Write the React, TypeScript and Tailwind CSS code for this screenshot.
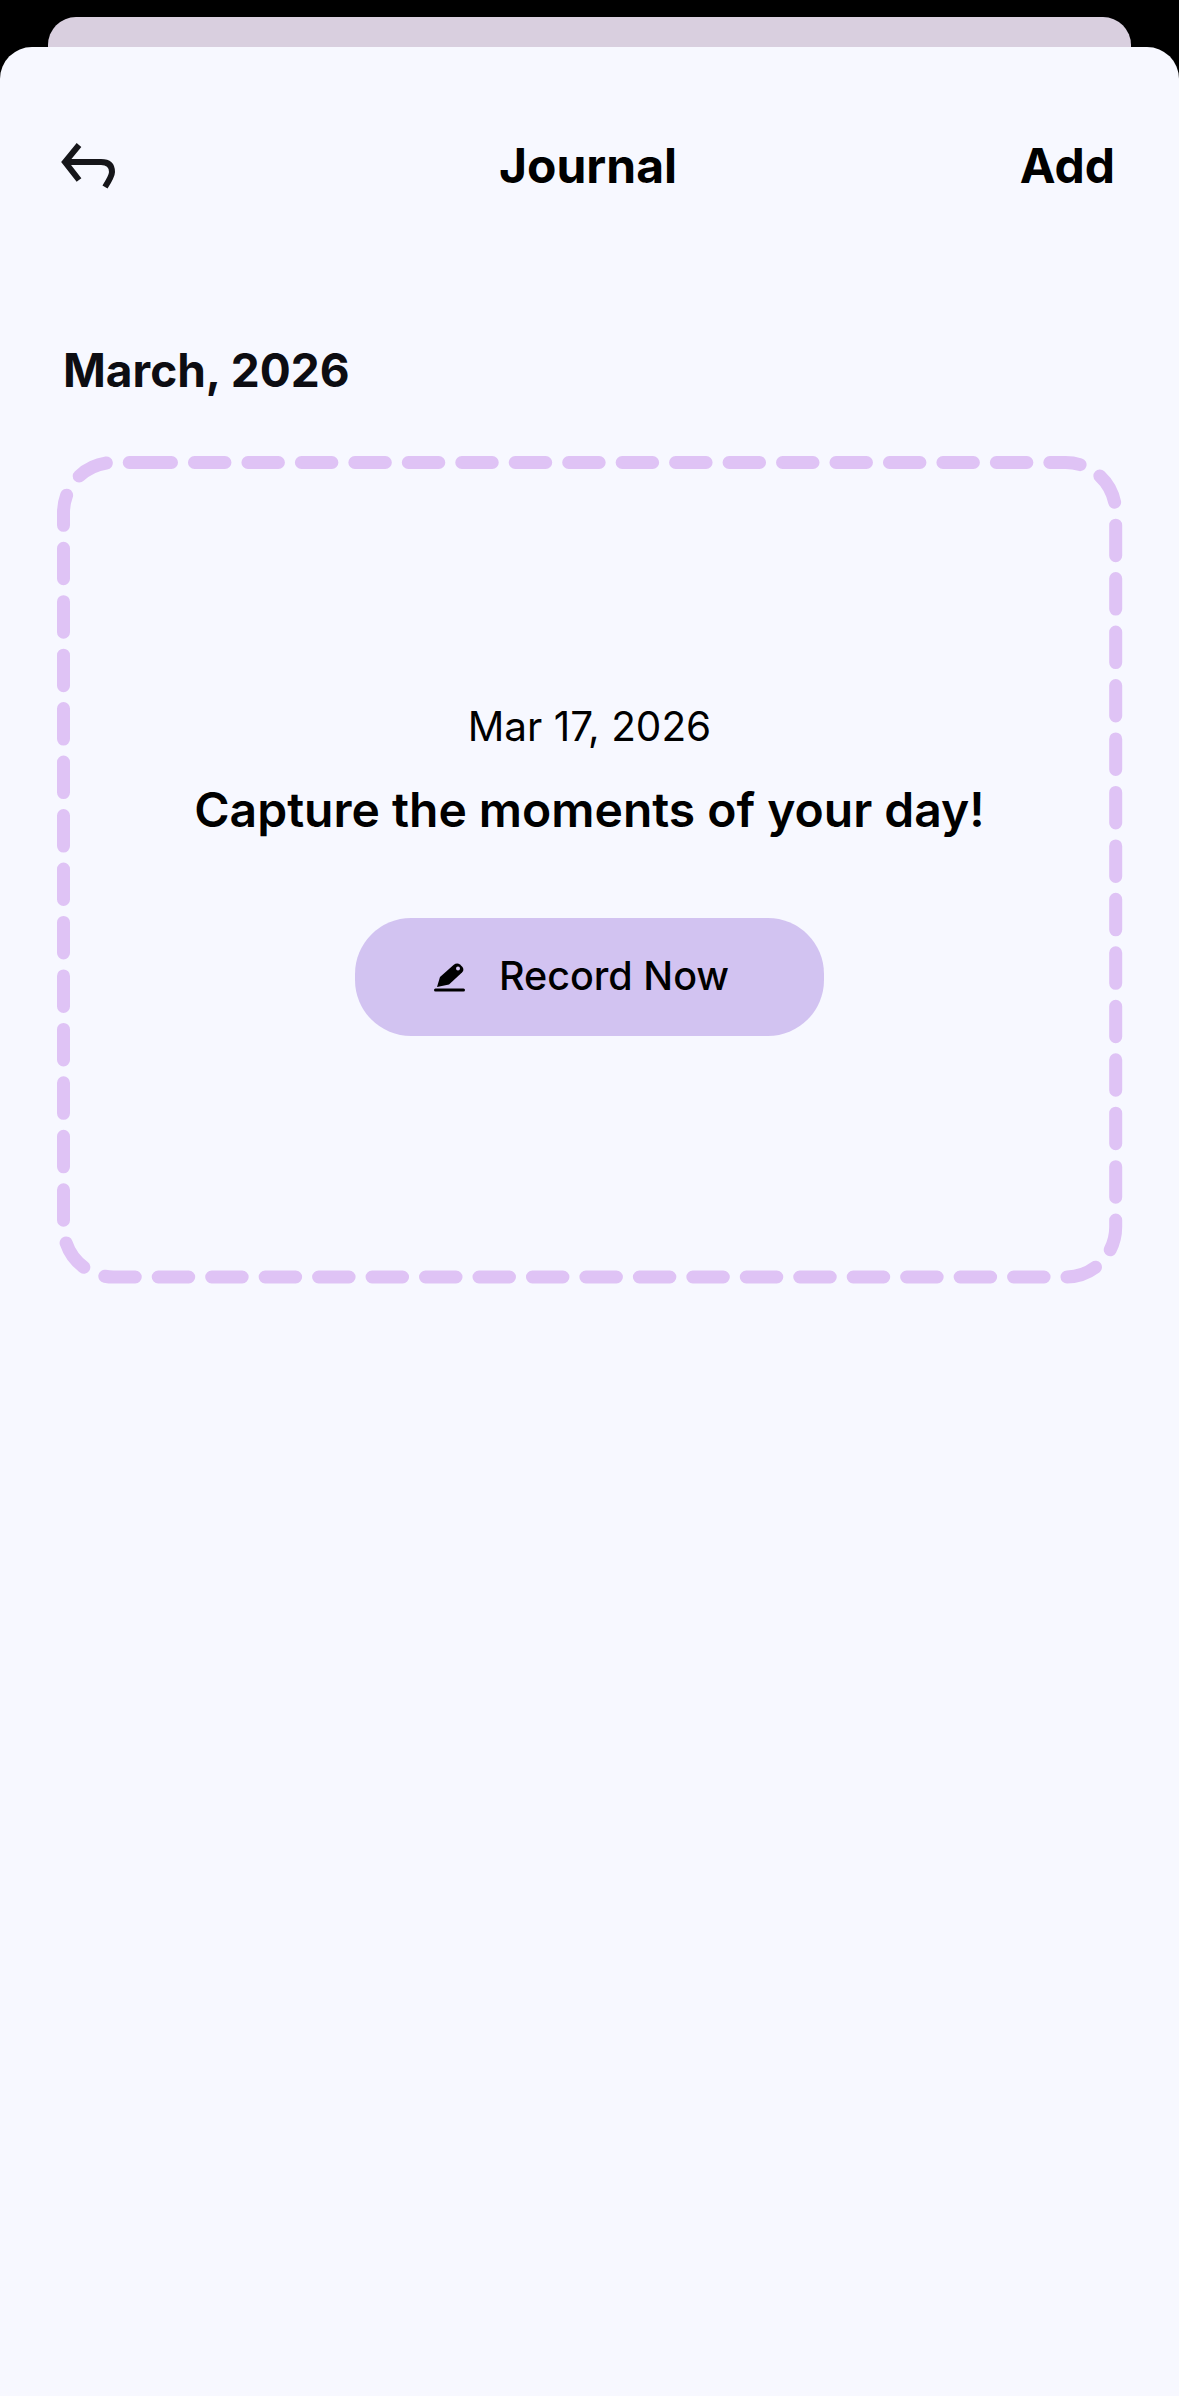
const App = () => {
  return (
    <div
      className="w-[1179px] h-[2396px] bg-black pt-[17px] flex flex-col overflow-hidden"
      style={{ fontFamily: 'Inter, sans-serif' }}
    >
      <div className="mx-[48px] h-[30px] shrink-0 bg-[#d9cfdf] rounded-t-[28px]" />
      <div className="flex-1 bg-[#f7f8ff] rounded-t-[32px] text-black">
        <div className="grid grid-cols-3 items-center pl-[61px] pr-[64px] pt-[74px] h-[164px]">
          <svg width="56" height="50" viewBox="0 0 56 50" fill="none" stroke="#16161a" strokeWidth="6">
            <path d="M18 4 L4 21 L18 39" strokeLinejoin="miter" />
            <path d="M4 21 H40 Q51 21 51 31 Q51 35 44 46" />
          </svg>
          <div className="text-center text-[48px] leading-[56px] font-bold">Journal</div>
          <div className="text-right text-[48px] leading-[56px] font-bold">Add</div>
        </div>

        <h2 className="ml-[63px] mt-[131px] text-[46px] leading-[56px] font-bold text-[#0d0d12]">March, 2026</h2>

        <div className="relative mx-[57px] mt-[58px] h-[828px] flex flex-col items-center">
          {/* dashed outline with round caps, a css border can't do this */}
          <svg className="absolute inset-0" width="1066" height="828" fill="none" stroke="#dfc3f5" strokeWidth="13" strokeLinecap="round">
            <path
              d="M84 6.5 H1008.7 A50 50 0 0 1 1058.7 56.5 V771 A50 50 0 0 1 1008.7 821 H56.5 A50 50 0 0 1 6.5 771 V56.5 A50 50 0 0 1 56.5 6.5 Z"
              strokeDasharray="30.5 22.96"
            />
          </svg>
          <div className="mt-[247px] text-[40.5px] leading-[48px]">Mar 17, 2026</div>
          <div className="mt-[29px] text-[48px] leading-[60px] font-semibold">Capture the moments of your day!</div>
          <button className="mt-[78px] w-[469px] h-[118px] pr-[16px] bg-[#d2c3f1] rounded-[56px] flex items-center justify-center gap-[33px] text-[39.5px] font-[450]">
            <svg width="32" height="32" viewBox="0 0 32 32" fill="black">
              <path d="M3 26 L6 16 L19.5 4 Q23 1.5 26 3.5 L28.5 6 Q30.5 9 28 11.5 L15 23.5 Z" />
              <circle cx="24" cy="7.5" r="2" fill="#d2c3f1" />
              <rect x="0" y="27.5" width="31" height="3" rx="1.5" />
            </svg>
            <span>Record Now</span>
          </button>
        </div>
      </div>
    </div>
  );
};

export default App;
